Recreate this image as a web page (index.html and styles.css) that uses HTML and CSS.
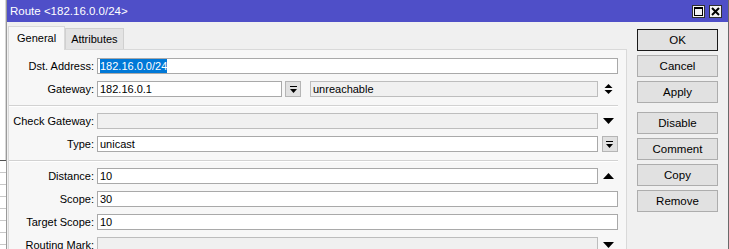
FILE: index.html
```html
<!DOCTYPE html>
<html lang="en">
<head>
    <meta charset="UTF-8">
    <title>Route &lt;182.16.0.0/24&gt;</title>
    <link rel="stylesheet" href="styles.css">
</head>
<body>
    <div class="screen">
        <div class="backdrop">
            <div class="backdrop-top"></div>
            <div class="backdrop-grid"></div>
        </div>
        <div class="window">
            <div class="titlebar">
                <span class="title">Route &lt;182.16.0.0/24&gt;</span>
                <div class="title-buttons">
                    <span class="title-btn">
                        <svg width="11" height="11" viewBox="0 0 11 11"><rect x="1.5" y="1.5" width="8" height="8" fill="none" stroke="#000" stroke-width="1"/><line x1="1.5" y1="2" x2="9.5" y2="2" stroke="#000" stroke-width="2"/></svg>
                    </span>
                    <span class="title-btn">
                        <svg width="11" height="11" viewBox="0 0 11 11"><path d="M2 2 L9 9 M9 2 L2 9" stroke="#000" stroke-width="2"/></svg>
                    </span>
                </div>
            </div>
            <div class="client">
                <div class="form-area">
                    <div class="tabs">
                        <div class="tab active">General</div>
                        <div class="tab">Attributes</div>
                    </div>
                    <div class="panel">
                        <div class="row">
                            <label class="label">Dst. Address:</label>
                            <div class="field"><span class="selected">182.16.0.0/24</span></div>
                        </div>
                        <div class="row">
                            <label class="label">Gateway:</label>
                            <div class="field gateway">182.16.0.1</div>
                            <span class="mini-btn">
                                <svg width="9" height="9" viewBox="0 0 9 9"><rect x="1" y="1" width="7" height="1" fill="#000"/><path d="M1 4 H8 L4.5 8 Z" fill="#000"/></svg>
                            </span>
                            <div class="field readonly state">unreachable</div>
                            <span class="addon">
                                <svg width="9" height="12" viewBox="0 0 9 12"><path d="M0.5 5 H8.5 L4.5 1 Z M0.5 7 H8.5 L4.5 11 Z" fill="#000"/></svg>
                            </span>
                        </div>
                        <div class="separator"></div>
                        <div class="row">
                            <label class="label">Check Gateway:</label>
                            <div class="field readonly"></div>
                            <span class="addon">
                                <svg width="11" height="6" viewBox="0 0 11 6"><path d="M0 0 H11 L5.5 6 Z" fill="#000"/></svg>
                            </span>
                        </div>
                        <div class="row">
                            <label class="label">Type:</label>
                            <div class="field">unicast</div>
                            <span class="addon">
                                <span class="mini-btn">
                                    <svg width="9" height="9" viewBox="0 0 9 9"><rect x="1" y="1" width="7" height="1" fill="#000"/><path d="M1 4 H8 L4.5 8 Z" fill="#000"/></svg>
                                </span>
                            </span>
                        </div>
                        <div class="separator"></div>
                        <div class="row">
                            <label class="label">Distance:</label>
                            <div class="field">10</div>
                            <span class="addon">
                                <svg width="11" height="6" viewBox="0 0 11 6"><path d="M0 6 H11 L5.5 0 Z" fill="#000"/></svg>
                            </span>
                        </div>
                        <div class="row">
                            <label class="label">Scope:</label>
                            <div class="field full">30</div>
                        </div>
                        <div class="row">
                            <label class="label">Target Scope:</label>
                            <div class="field full">10</div>
                        </div>
                        <div class="row">
                            <label class="label">Routing Mark:</label>
                            <div class="field readonly"></div>
                            <span class="addon">
                                <svg width="11" height="6" viewBox="0 0 11 6"><path d="M0 0 H11 L5.5 6 Z" fill="#000"/></svg>
                            </span>
                        </div>
                    </div>
                </div>
                <div class="actions">
                    <button class="btn default">OK</button>
                    <button class="btn">Cancel</button>
                    <button class="btn">Apply</button>
                    <div class="actions-gap"></div>
                    <button class="btn">Disable</button>
                    <button class="btn">Comment</button>
                    <button class="btn">Copy</button>
                    <button class="btn">Remove</button>
                </div>
            </div>
        </div>
    </div>
</body>
</html>
```

FILE: styles.css
```css
html, body {
    margin: 0;
    height: 100%;
    overflow: hidden;
}
body {
    font-family: 'Liberation Sans', Arial, sans-serif;
    font-size: 11px;
    color: #000;
    background-color: #fff;
}
.screen {
    display: flex;
    height: 249px;
    overflow: hidden;
}
.backdrop {
    width: 6px;
    display: flex;
    flex-direction: column;
    border-right: 1px solid #9a9a9a;
    background-color: #fff;
}
.backdrop-top {
    height: 160px;
    flex-shrink: 0;
    border-right: 1px solid #d8d8d8;
}
.backdrop-grid {
    flex: 1;
    border-top: 1px solid #505050;
    background-image: repeating-linear-gradient(to bottom, transparent 0, transparent 11px, #c8c8c8 11px, #c8c8c8 12px);
}
.window {
    width: 721px;
    display: flex;
    flex-direction: column;
    background-color: #f0f0f0;
    border-right: 1px solid #6a6a6a;
    overflow: hidden;
}
.titlebar {
    height: 22px;
    flex-shrink: 0;
    display: flex;
    align-items: center;
    justify-content: space-between;
    background-color: #4f4fc8;
    color: #fff;
    padding: 0 6px 0 3px;
}
.title {
    font-size: 11.5px;
}
.title-buttons {
    display: flex;
    gap: 4px;
}
.title-btn {
    width: 11px;
    height: 11px;
    display: flex;
    background-color: #f4f4f4;
    border: 1px solid #303030;
}
.client {
    flex: 1;
    min-height: 0;
    display: flex;
    align-items: flex-start;
}
.form-area {
    width: 619px;
    flex-shrink: 0;
    padding: 4px 0 0 1px;
}
.tabs {
    display: flex;
    align-items: flex-end;
    height: 23px;
}
.tab {
    height: 20px;
    line-height: 20px;
    padding: 0 5px;
    background-color: #e3e3e3;
    border: 1px solid #d0d0d0;
    border-bottom: none;
}
.tab.active {
    height: 23px;
    line-height: 22px;
    padding: 0 8px;
    background-color: #f7f7f7;
    border-color: #d9d9d9;
    margin-bottom: -1px;
    position: relative;
    z-index: 1;
}
.panel {
    border: 1px solid #d9d9d9;
    border-bottom: none;
    background-color: #f7f7f7;
    padding: 8px 8px 0 0;
}
.row {
    display: flex;
    align-items: center;
    height: 16px;
    margin-bottom: 7px;
}
.label {
    width: 85px;
    margin-right: 3px;
    text-align: right;
    white-space: nowrap;
}
.field {
    flex: 1;
    height: 14px;
    line-height: 14px;
    padding: 0 2px;
    background-color: #fff;
    border: 1px solid #a9a9a9;
    white-space: nowrap;
    overflow: hidden;
}
.field.readonly {
    background-color: #f0f0f0;
    border-color: #bdbdbd;
}
.field.gateway {
    flex: none;
    width: 179px;
}
.field.state {
    margin-left: 9px;
}
.selected {
    background-color: #0078d7;
    color: #fff;
    padding: 1px 0;
}
.addon {
    width: 20px;
    height: 16px;
    display: flex;
    align-items: center;
    justify-content: center;
}
.mini-btn {
    width: 14px;
    height: 14px;
    margin-left: 3px;
    display: flex;
    align-items: center;
    justify-content: center;
    background-color: #e1e1e1;
    border: 1px solid #b5b5b5;
}
.separator {
    height: 1px;
    margin: 8px 0 6px 0;
    border-top: 1px solid #d2d2d2;
    background-color: #fff;
}
.actions {
    display: flex;
    flex-direction: column;
    gap: 4px;
    padding: 7px 0 0 10px;
}
.actions-gap {
    height: 1px;
}
.btn {
    width: 81px;
    height: 22px;
    flex-shrink: 0;
    padding: 0;
    font-family: inherit;
    font-size: 11.5px;
    color: #000;
    background-color: #e1e1e1;
    border: 1px solid #adadad;
}
.btn.default {
    border-color: #1a1a1a;
}
```
